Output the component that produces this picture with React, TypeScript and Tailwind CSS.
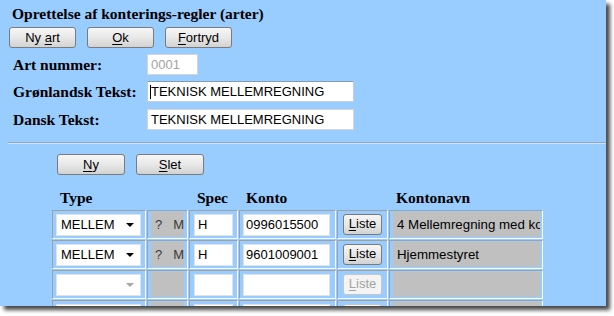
import React from 'react';

const serif = "font-['Liberation_Serif','Times_New_Roman',serif]";
const sans = "font-['Liberation_Sans',Arial,sans-serif]";

// Button with one underlined access-key letter
const Btn = ({ pre = '', key1 = '', post = '', w = 'w-[67px]', disabled = false }: { pre?: string; key1?: string; post?: string; w?: string; disabled?: boolean }) => (
  <div
    className={`${w} h-[21px] rounded-[3px] border flex items-center justify-center text-[13px] ${sans} ${
      disabled
        ? 'border-[#c4c7ca] bg-[#f4f4f4] text-[#a3a3a3]'
        : 'border-[#7b7b7b] bg-gradient-to-b from-[#f6f6f6] via-[#e8e8e8] to-[#d2d2d2] text-black'
    }`}
  >
    {key1 && (
      <span>
        {pre}
        <span className="underline underline-offset-[2px]">{key1}</span>
        {post}
      </span>
    )}
  </div>
);

const Field = ({ text = '', w, muted = false, caret = false, focus = false }: { text?: string; w: string; muted?: boolean; caret?: boolean; focus?: boolean }) => (
  <div
    className={`${w} h-[21px] bg-white border relative flex items-center pl-[3px] text-[13px] ${sans} ${
      focus ? 'border-[#c5cfdc] border-t-[#7f9db9]' : 'border-[#d4d4d4]'
    } ${muted ? 'text-[#a4a4a4]' : 'text-black'}`}
  >
    {caret && <div className="absolute left-[2px] top-[3px] w-[1px] h-[14px] bg-black" />}
    <span className="whitespace-nowrap">{text}</span>
  </div>
);

const Cell = ({ w, children, pl = 'pl-[3px]' }: { w: string; children?: React.ReactNode; pl?: string }) => (
  <div className={`${w} h-[29px] shrink-0 border border-t-[#a0a0a0] border-l-[#a0a0a0] border-r-white border-b-white flex items-center ${pl}`}>
    {children}
  </div>
);

type Row = { type?: string; spec?: string; konto?: string; navn?: string; q?: boolean; active: boolean; label?: boolean };

const rows: Row[] = [
  { type: 'MELLEM', spec: 'H', konto: '0996015500', navn: '4 Mellemregning med kontering', q: true, active: true, label: true },
  { type: 'MELLEM', spec: 'H', konto: '9601009001', navn: 'Hjemmestyret', q: true, active: true, label: true },
  { active: false, label: true },
  { active: false },
];

const Select = ({ value, active }: { value?: string; active: boolean }) => (
  <div className={`w-[85px] h-[22px] bg-white border border-[#e2e2e2] flex items-center justify-between pl-[4px] pr-[6px] text-[13px] ${sans} text-black`}>
    <span>{value ?? ''}</span>
    <div
      className={`w-0 h-0 border-l-[4px] border-r-[4px] border-t-[4px] border-l-transparent border-r-transparent ${
        active ? 'border-t-black' : 'border-t-[#a8a8a8]'
      }`}
    />
  </div>
);

export default function App() {
  return (
    <div className="w-[614px] h-[316px] bg-white">
      <div className="w-[606px] h-[306px] bg-[#99ccff] overflow-hidden shadow-[4px_4px_4px_rgba(0,0,0,0.72)]">
        {/* title */}
        <div className={`pl-[12px] pt-[5px] text-[15.5px] leading-[18px] font-bold text-black ${serif}`}>
          Oprettelse af konterings-regler (arter)
        </div>

        <div className="flex gap-[11px] pl-[9px] mt-[4px]">
          <Btn pre="Ny " key1="a" post="rt" />
          <Btn key1="O" post="k" />
          <Btn key1="F" post="ortryd" />
        </div>

        {/* form fields */}
        <div className={`mt-[6px] flex flex-col gap-[6px] ${serif}`}>
          <div className="flex items-center h-[21px]">
            <div className="w-[147px] pl-[13px] text-[15.5px] font-bold">Art nummer:</div>
            <Field text="0001" w="w-[51px]" muted />
          </div>
          <div className="flex items-center h-[21px]">
            <div className="w-[147px] pl-[13px] text-[15.5px] font-bold">Grønlandsk Tekst:</div>
            <Field text="TEKNISK MELLEMREGNING" w="w-[207px]" caret focus />
          </div>
          <div className="flex items-center h-[21px] mt-[1px]">
            <div className="w-[147px] pl-[13px] text-[15.5px] font-bold">Dansk Tekst:</div>
            <Field text="TEKNISK MELLEMREGNING" w="w-[207px]" />
          </div>
        </div>

        <div className="ml-[8px] mt-[12px] border-t border-t-[#97a6b5] border-b border-b-[#c8e2fb]" />

        <div className="flex gap-[11px] pl-[57px] mt-[10px]">
          <Btn key1="N" post="y" w="w-[68px]" />
          <Btn key1="S" post="let" w="w-[68px]" />
        </div>

        {/* column headers */}
        <div className={`flex mt-[14px] pl-[52px] h-[18px] leading-[18px] text-[15.5px] font-bold text-black ${serif}`}>
          <div className="w-[137px] pl-[8px]">Type</div>
          <div className="w-[50px] pl-[8px]">Spec</div>
          <div className="w-[150px] pl-[7px]">Konto</div>
          <div className="pl-[7px]">Kontonavn</div>
        </div>

        {/* rows */}
        <div className="mt-[3px] pl-[52px] flex flex-col gap-[1px]">
          {rows.map((r, i) => (
            <div key={i} className="flex gap-[1px]">
              <Cell w="w-[94px]">
                <Select value={r.type} active={r.active} />
              </Cell>
              <Cell w="w-[41px]">
                <div className={`w-[33px] h-[25px] bg-[#c0c0c0] overflow-hidden flex items-center pl-[4px] text-[13px] text-[#3a3a3a] ${sans}`}>
                  {r.q && (
                    <>
                      <span>?</span>
                      <span className="ml-[11px]">M</span>
                    </>
                  )}
                </div>
              </Cell>
              <Cell w="w-[49px]" pl="pl-[4px]">
                <div className={`w-[39px] h-[22px] bg-white border border-[#e2e2e2] flex items-center pl-[3px] text-[13px] ${sans}`}>
                  {r.spec}
                </div>
              </Cell>
              <Cell w="w-[97px]">
                <div className={`w-[87px] h-[22px] bg-white border border-[#e2e2e2] flex items-center pl-[2px] text-[13px] ${sans}`}>
                  {r.konto}
                </div>
              </Cell>
              <Cell w="w-[51px]" pl="pl-[5px]">
                <div className="h-[22px] flex">
                  {r.label ? (
                    <Btn key1="L" post="iste" w="w-[39px]" disabled={!r.active} />
                  ) : (
                    <Btn w="w-[39px]" disabled />
                  )}
                </div>
              </Cell>
              <Cell w="w-[154px]">
                <div className={`w-[147px] h-[25px] bg-[#c0c0c0] overflow-hidden flex items-center pl-[4px] text-[13.3px] text-black whitespace-nowrap ${sans}`}>
                  {r.navn}
                </div>
              </Cell>
            </div>
          ))}
        </div>
      </div>
    </div>
  );
}
